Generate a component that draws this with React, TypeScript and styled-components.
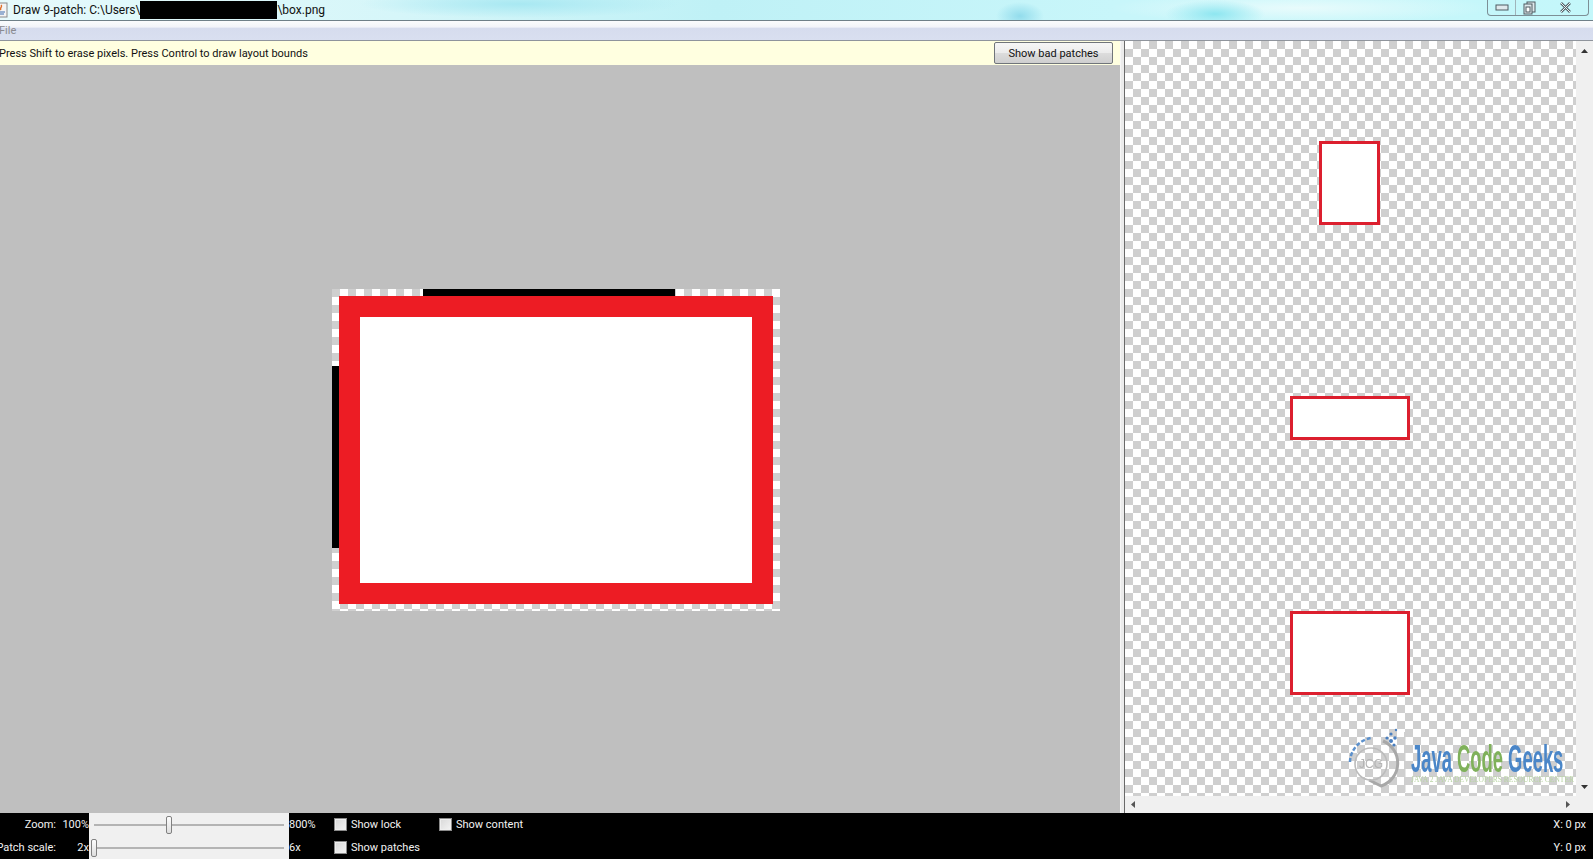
import React from "react";
import styled, { createGlobalStyle } from "styled-components";

const Global = createGlobalStyle`
  html, body { margin: 0; padding: 0; background: #000; }
  body { font-family: Roboto, "Open Sans", "Liberation Sans", sans-serif; }
  * { box-sizing: border-box; }
`;

const checker = (light: string, dark: string, size: number) => `
  background-color: ${light};
  background-image: conic-gradient(${dark} 0 25%, ${light} 0 50%, ${dark} 0 75%, ${light} 0);
  background-size: ${size * 2}px ${size * 2}px;
`;

const Win = styled.div`
  width: 1593px;
  height: 859px;
  overflow: hidden;
  display: flex;
  flex-direction: column;
  background: #000;
`;

const TitleBar = styled.div`
  height: 21px;
  flex: none;
  display: flex;
  align-items: center;
  justify-content: space-between;
  border-bottom: 1px solid #6f8088;
  background:
    radial-gradient(ellipse 50px 14px at 1215px 14px, #8ee6f0, transparent),
    radial-gradient(ellipse 24px 14px at 1020px 16px, #92dcec, transparent),
    radial-gradient(ellipse 190px 16px at 1300px 8px, #e8fbfc, transparent),
    radial-gradient(ellipse 160px 14px at 520px 4px, #a8e8f2, transparent),
    linear-gradient(90deg, #e6fafc 0, #d6f6f9 25%, #bff1f6 45%, #c8f6fa 70%, #c4f7fa 100%);
`;

const TitleLeft = styled.div`
  display: flex;
  align-items: center;
  font-size: 12px;
  color: #111;
  white-space: nowrap;
`;

const AppIcon = styled.svg`
  width: 14px;
  height: 18px;
  margin-left: -6px;
  margin-right: 5px;
  flex: none;
`;

const Redact = styled.span`
  display: inline-block;
  width: 137px;
  height: 18px;
  background: #000;
`;

const WinButtons = styled.div`
  display: flex;
  height: 16px;
  margin: -4px 4px 0 0;
  border: 1px solid #7d8f96;
  border-top: none;
  border-radius: 0 0 4px 4px;
`;

const WinButton = styled.div<{ $w: number; $line?: boolean }>`
  width: ${(p) => p.$w}px;
  display: flex;
  align-items: center;
  justify-content: center;
  border-right: ${(p) => (p.$line ? "1px solid #9fb4ba" : "none")};
`;

const MenuBar = styled.div`
  height: 20px;
  flex: none;
  display: flex;
  align-items: center;
  font-size: 11px;
  color: #8a8a90;
  border-bottom: 1px solid #8f949c;
  background: linear-gradient(#fbfcfd 0, #f2f4f9 32%, #d6dcee 38%, #d9dff0 100%);
`;

const MenuItem = styled.span`
  margin-left: -1px;
`;

const Body = styled.div`
  height: 772px;
  flex: none;
  display: flex;
`;

const LeftPane = styled.div`
  width: 1120px;
  flex: none;
  display: flex;
  flex-direction: column;
  background: #bfbfbf;
`;

const InfoBar = styled.div`
  height: 24px;
  flex: none;
  display: flex;
  align-items: center;
  justify-content: space-between;
  padding-right: 7px;
  background: #ffffe0;
  font-size: 11px;
  color: #111;
`;

const InfoText = styled.span`
  margin-left: -1px;
`;

const PatchButton = styled.button`
  width: 119px;
  height: 22px;
  padding: 0;
  font: inherit;
  color: #111;
  border: 1px solid #70757a;
  border-radius: 2px;
  background: linear-gradient(#f6f6f6 0, #ececec 48%, #dcdcdc 52%, #cfcfcf 100%);
`;

const Canvas = styled.div`
  flex: 1;
  padding: 224px 0 0 332px;
`;

const PatchImage = styled.div`
  position: relative;
  width: 448px;
  height: 322px;
  padding: 7px;
  ${checker("#cfcfcf", "#ffffff", 8)}
`;

const RedFrame = styled.div`
  width: 434px;
  height: 308px;
  border: 21px solid #ed1c24;
  background: #fff;
`;

const TopMark = styled.div`
  position: absolute;
  left: 91px;
  top: 0;
  width: 252px;
  height: 7px;
  background: #000;
`;

const LeftMark = styled.div`
  position: absolute;
  left: 0;
  top: 77px;
  width: 7px;
  height: 182px;
  background: #000;
`;

const Divider = styled.div`
  width: 4px;
  flex: none;
  background: #ececec;
  border-left: 1px solid #f7f7f7;
`;

const RightPane = styled.div`
  flex: 1;
  display: grid;
  grid-template-columns: 1fr 17px;
  grid-template-rows: 1fr 17px;
  border-left: 1px solid #6a6a6a;
  background: #f0f0f0;
`;

const Preview = styled.div`
  position: relative;
  display: flex;
  flex-direction: column;
  align-items: center;
  padding: 100px 2px 0 0;
  ${checker("#ffffff", "#cfcfcf", 8)}
`;

const Stretch = styled.div<{ $w: number; $h: number; $gap: number }>`
  width: ${(p) => p.$w}px;
  height: ${(p) => p.$h}px;
  margin-top: ${(p) => p.$gap}px;
  border: 3px solid #dc1f2e;
  background: #fff;
  flex: none;
`;

const VScroll = styled.div`
  display: flex;
  flex-direction: column;
  align-items: center;
  justify-content: space-between;
  padding: 7px 0 6px;
  background: #f0f0f0;
`;

const HScroll = styled.div`
  display: flex;
  align-items: center;
  justify-content: space-between;
  padding: 0 5px 0 5px;
  background: #f0f0f0;
`;

const Corner = styled.div`
  background: #f0f0f0;
`;

const Arrow = styled.svg`
  width: 7px;
  height: 7px;
  display: block;
`;

const Logo = styled.div`
  position: absolute;
  right: 13px;
  bottom: 2px;
  width: 216px;
  height: 68px;
  display: flex;
  filter: blur(0.45px);
`;

const LogoMark = styled.svg`
  width: 64px;
  height: 68px;
  flex: none;
`;

const LogoText = styled.div`
  display: flex;
  flex-direction: column;
  padding-top: 17px;
  width: 152px;
`;

const LogoTitle = styled.div`
  width: 152px;
  height: 32px;
  overflow: visible;
  transform: scaleX(0.484);
  transform-origin: 0 0;
  font-family: "Liberation Sans", sans-serif;
  font-weight: 700;
  font-size: 38px;
  line-height: 32px;
  white-space: nowrap;
  color: #4a86c8;
`;

const LogoGreen = styled.span`
  color: #7fb15a;
`;

const LogoSub = styled.div`
  font-family: "Liberation Serif", serif;
  font-size: 7.5px;
  line-height: 9px;
  color: #b9d4a4;
  white-space: nowrap;
`;

const BottomBar = styled.div`
  flex: 1;
  display: flex;
  flex-direction: column;
  background: #000;
  color: #f2f2f2;
  font-size: 11px;
`;

const Row = styled.div`
  height: 23px;
  flex: none;
  display: flex;
  align-items: center;
`;

const Label = styled.div`
  width: 56px;
  flex: none;
  display: flex;
  justify-content: flex-end;
  white-space: nowrap;
`;

const Value = styled.div`
  width: 33px;
  flex: none;
  text-align: right;
  white-space: nowrap;
`;

const SliderBox = styled.div`
  width: 200px;
  height: 23px;
  flex: none;
  display: flex;
  align-items: center;
  padding: 0 5px;
  background: #f0f0f0;
`;

const Track = styled.div`
  position: relative;
  width: 190px;
  height: 2px;
  background: #b4b4b4;
`;

const Thumb = styled.div<{ $at: number }>`
  position: absolute;
  left: ${(p) => p.$at}px;
  top: -8px;
  width: 6px;
  height: 18px;
  border: 1px solid #808080;
  border-radius: 2px;
  background: linear-gradient(#fdfdfd, #dedede);
`;

const Max = styled.div`
  width: 45px;
  flex: none;
  white-space: nowrap;
`;

const CheckItem = styled.div<{ $w: number }>`
  width: ${(p) => p.$w}px;
  flex: none;
  display: flex;
  align-items: center;
  gap: 4px;
  white-space: nowrap;
`;

const Box = styled.span`
  width: 13px;
  height: 13px;
  flex: none;
  border: 1px solid #8a8a8a;
  background: linear-gradient(135deg, #d8d8d8, #f4f4f4);
  box-shadow: inset 0 0 0 1px #eee;
`;

const Coord = styled.div`
  margin-left: auto;
  padding-right: 7px;
  white-space: nowrap;
`;

const Up = () => (
  <Arrow viewBox="0 0 7 7"><path d="M3.5 1 L7 5 H0 Z" fill="#333" /></Arrow>
);
const Down = () => (
  <Arrow viewBox="0 0 7 7"><path d="M0 2 H7 L3.5 6 Z" fill="#333" /></Arrow>
);
const LeftA = () => (
  <Arrow viewBox="0 0 7 7"><path d="M5 0 V7 L1 3.5 Z" fill="#555" /></Arrow>
);
const RightA = () => (
  <Arrow viewBox="0 0 7 7"><path d="M2 0 V7 L6 3.5 Z" fill="#555" /></Arrow>
);

export default function App() {
  return (
    <Win>
      <Global />
      <TitleBar>
        <TitleLeft>
          <AppIcon viewBox="0 0 14 18">
            <rect x="1" y="2" width="12" height="14" fill="#f4f4f4" stroke="#8a8a8a" />
            <path d="M7 4 C9 6 5 7 7 9" stroke="#e0702a" fill="none" strokeWidth="1.4" />
            <path d="M3 11 H11 M4 13 H10" stroke="#3f6fb0" strokeWidth="1.2" />
          </AppIcon>
          Draw 9-patch: C:\Users\<Redact />\box.png
        </TitleLeft>
        <WinButtons>
          <WinButton $w={28} $line>
            <svg width="14" height="7" viewBox="0 0 14 7">
              <rect x="1" y="1" width="12" height="5" fill="#dfe9ec" stroke="#4e5a60" />
            </svg>
          </WinButton>
          <WinButton $w={26} $line={false}>
            <svg width="13" height="14" viewBox="0 0 13 14">
              <rect x="4" y="1" width="8" height="10" fill="#dfe9ec" stroke="#4e5a60" />
              <rect x="1" y="3" width="8" height="10" fill="#dfe9ec" stroke="#4e5a60" />
              <rect x="3" y="6" width="4" height="5" fill="#fff" stroke="#4e5a60" />
            </svg>
          </WinButton>
          <WinButton $w={46}>
            <svg width="13" height="13" viewBox="0 0 13 13">
              <path d="M2 2 L11 11 M11 2 L2 11" stroke="#55636a" strokeWidth="2.6" />
              <path d="M2 2 L11 11 M11 2 L2 11" stroke="#e8f2f4" strokeWidth="1" />
            </svg>
          </WinButton>
        </WinButtons>
      </TitleBar>
      <MenuBar><MenuItem>File</MenuItem></MenuBar>
      <Body>
        <LeftPane>
          <InfoBar>
            <InfoText>Press Shift to erase pixels. Press Control to draw layout bounds</InfoText>
            <PatchButton>Show bad patches</PatchButton>
          </InfoBar>
          <Canvas>
            <PatchImage>
              <TopMark />
              <LeftMark />
              <RedFrame />
            </PatchImage>
          </Canvas>
        </LeftPane>
        <Divider />
        <RightPane>
          <Preview>
            <Stretch $w={61} $h={84} $gap={0} />
            <Stretch $w={120} $h={44} $gap={171} />
            <Stretch $w={120} $h={84} $gap={171} />
            <Logo>
              <LogoMark viewBox="0 0 64 68">
                <path d="M3 36 A25 25 0 0 1 24 12" stroke="#5b90cc" strokeWidth="2.5" fill="none" strokeDasharray="4 2" />
                <path d="M36 15 A24 24 0 0 1 34 60 L22 54" stroke="#a8a8a8" strokeWidth="3" fill="none" />
                <circle cx="24" cy="38" r="16" stroke="#bcbcbc" strokeWidth="1.6" fill="none" />
                <text x="24" y="42" textAnchor="middle" fontSize="12" fontFamily="Liberation Sans" fill="#b4b4b4">JCG</text>
                <g fill="#4a7fc0">
                  <circle cx="44" cy="8" r="1.6" /><circle cx="48" cy="12" r="1.8" /><circle cx="44" cy="15" r="2" />
                  <circle cx="40" cy="12" r="1.6" /><circle cx="49" cy="4" r="1.2" /><circle cx="47" cy="19" r="1.6" />
                </g>
                <rect x="57" y="6" width="1.5" height="60" fill="#cfcfcf" />
              </LogoMark>
              <LogoText>
                <LogoTitle>Java <LogoGreen>Code</LogoGreen> Geeks</LogoTitle>
                <LogoSub>JAVA 2 JAVA DEVELOPERS RESOURCE CENTER</LogoSub>
              </LogoText>
            </Logo>
          </Preview>
          <VScroll><Up /><Down /></VScroll>
          <HScroll><LeftA /><RightA /></HScroll>
          <Corner />
        </RightPane>
      </Body>
      <BottomBar>
        <Row>
          <Label>Zoom:</Label>
          <Value>100%</Value>
          <SliderBox><Track><Thumb $at={72} /></Track></SliderBox>
          <Max>800%</Max>
          <CheckItem $w={105}><Box />Show lock</CheckItem>
          <CheckItem $w={120}><Box />Show content</CheckItem>
          <Coord>X: 0 px</Coord>
        </Row>
        <Row>
          <Label>Patch scale:</Label>
          <Value>2x</Value>
          <SliderBox><Track><Thumb $at={-3} /></Track></SliderBox>
          <Max>6x</Max>
          <CheckItem $w={105}><Box />Show patches</CheckItem>
          <Coord>Y: 0 px</Coord>
        </Row>
      </BottomBar>
    </Win>
  );
}
